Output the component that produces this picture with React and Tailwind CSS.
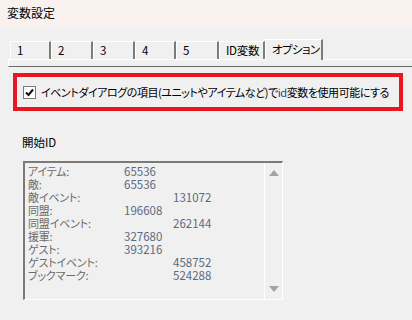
import React from "react";

const tabs = ["1", "2", "3", "4", "5", "ID変数"];
const tabWidths = [41, 42, 42, 41, 43, 46];

const rows = [
  ["アイテム:", "65536", false],
  ["敵:", "65536", false],
  ["敵イベント:", "131072", true],
  ["同盟:", "196608", false],
  ["同盟イベント:", "262144", true],
  ["援軍:", "327680", false],
  ["ゲスト:", "393216", false],
  ["ゲストイベント:", "458752", true],
  ["ブックマーク:", "524288", true],
];

export default function App() {
  return (
    <div className="w-[412px] h-[320px] overflow-hidden whitespace-nowrap bg-[#f0f0f0] text-[12px] leading-none text-black font-['Noto_Sans_CJK_JP','Noto_Sans',sans-serif] [font-feature-settings:'palt']">
      {/* title bar */}
      <div className="h-[28px] bg-[#f8f1ee] pl-[7px] pt-[7px] font-normal">変数設定</div>

      {/* tab strip */}
      <div className="mt-[10px] flex items-end pl-[10px] h-[21px]">
        {tabs.map((t, i) => (
          <div
            key={t}
            style={{ width: tabWidths[i] }}
            className="h-[18px] border-t border-l border-white border-r-2 border-r-[#7c7c7c] pl-[6px] pt-[3px] text-[11.5px] tracking-[-0.3px]"
          >
            {t}
          </div>
        ))}
        <div className="w-[58px] h-[21px] border-t border-l border-white border-r-2 border-r-[#7c7c7c] pl-[6px] pt-[4px] -mb-[1px] bg-[#f0f0f0] relative text-[11.5px] tracking-[-0.6px]">
          オプション
        </div>
      </div>
      <div className="ml-[8px] h-[8px] border-t border-l border-white border-b border-b-[#6a6a6a]" />

      {/* highlighted option */}
      <div className="ml-[13px] mt-[6px] w-[390px] h-[38px] border-4 border-[#e8171f] flex items-center pl-[6px]">
        <div className="w-[13px] h-[13px] border border-[#7a7a7a] bg-white flex items-center justify-center">
          <svg width="9" height="9" viewBox="0 0 9 9">
            <path d="M1 4.5 L3.5 7 L8 1.5" fill="none" stroke="#111" strokeWidth="2" />
          </svg>
        </div>
        <span className="ml-[5px] text-[11px] tracking-[-0.45px]">
          イベントダイアログの項目(ユニットやアイテムなど)で<span className="text-[#1c3f9c]">id</span>変数を使用可能にする
        </span>
      </div>

      {/* start ID list */}
      <div className="ml-[22px] mt-[26px] text-[11.5px]">開始ID</div>
      <div className="ml-[23px] mt-[12px] w-[260px] h-[139px] border-t-2 border-l-2 border-[#7a7a7a] border-r border-b border-r-white border-b-white flex">
        <div className="flex-1 pl-[3px] pt-[2px] text-[#6b6b6b] text-[11px] tracking-[-0.2px]">
          {rows.map(([label, num, far]) => (
            <div key={label} className="flex h-[13px] items-center leading-[13px]">
              <span className="w-[96px]">{label}</span>
              <span className={far ? "pl-[49px] text-[#5d6a80] tracking-normal text-[11.5px]" : "text-[#5d6a80] tracking-normal text-[11.5px]"}>{num}</span>
            </div>
          ))}
        </div>
        <div className="w-[18px] border-l border-white flex flex-col justify-between items-center py-[7px]">
          <svg width="10" height="6" viewBox="0 0 10 6">
            <path d="M5 0 L10 6 L0 6 Z" fill="#a3a3a3" />
          </svg>
          <svg width="10" height="6" viewBox="0 0 10 6">
            <path d="M0 0 L10 0 L5 6 Z" fill="#a3a3a3" />
          </svg>
        </div>
      </div>
    </div>
  );
}
